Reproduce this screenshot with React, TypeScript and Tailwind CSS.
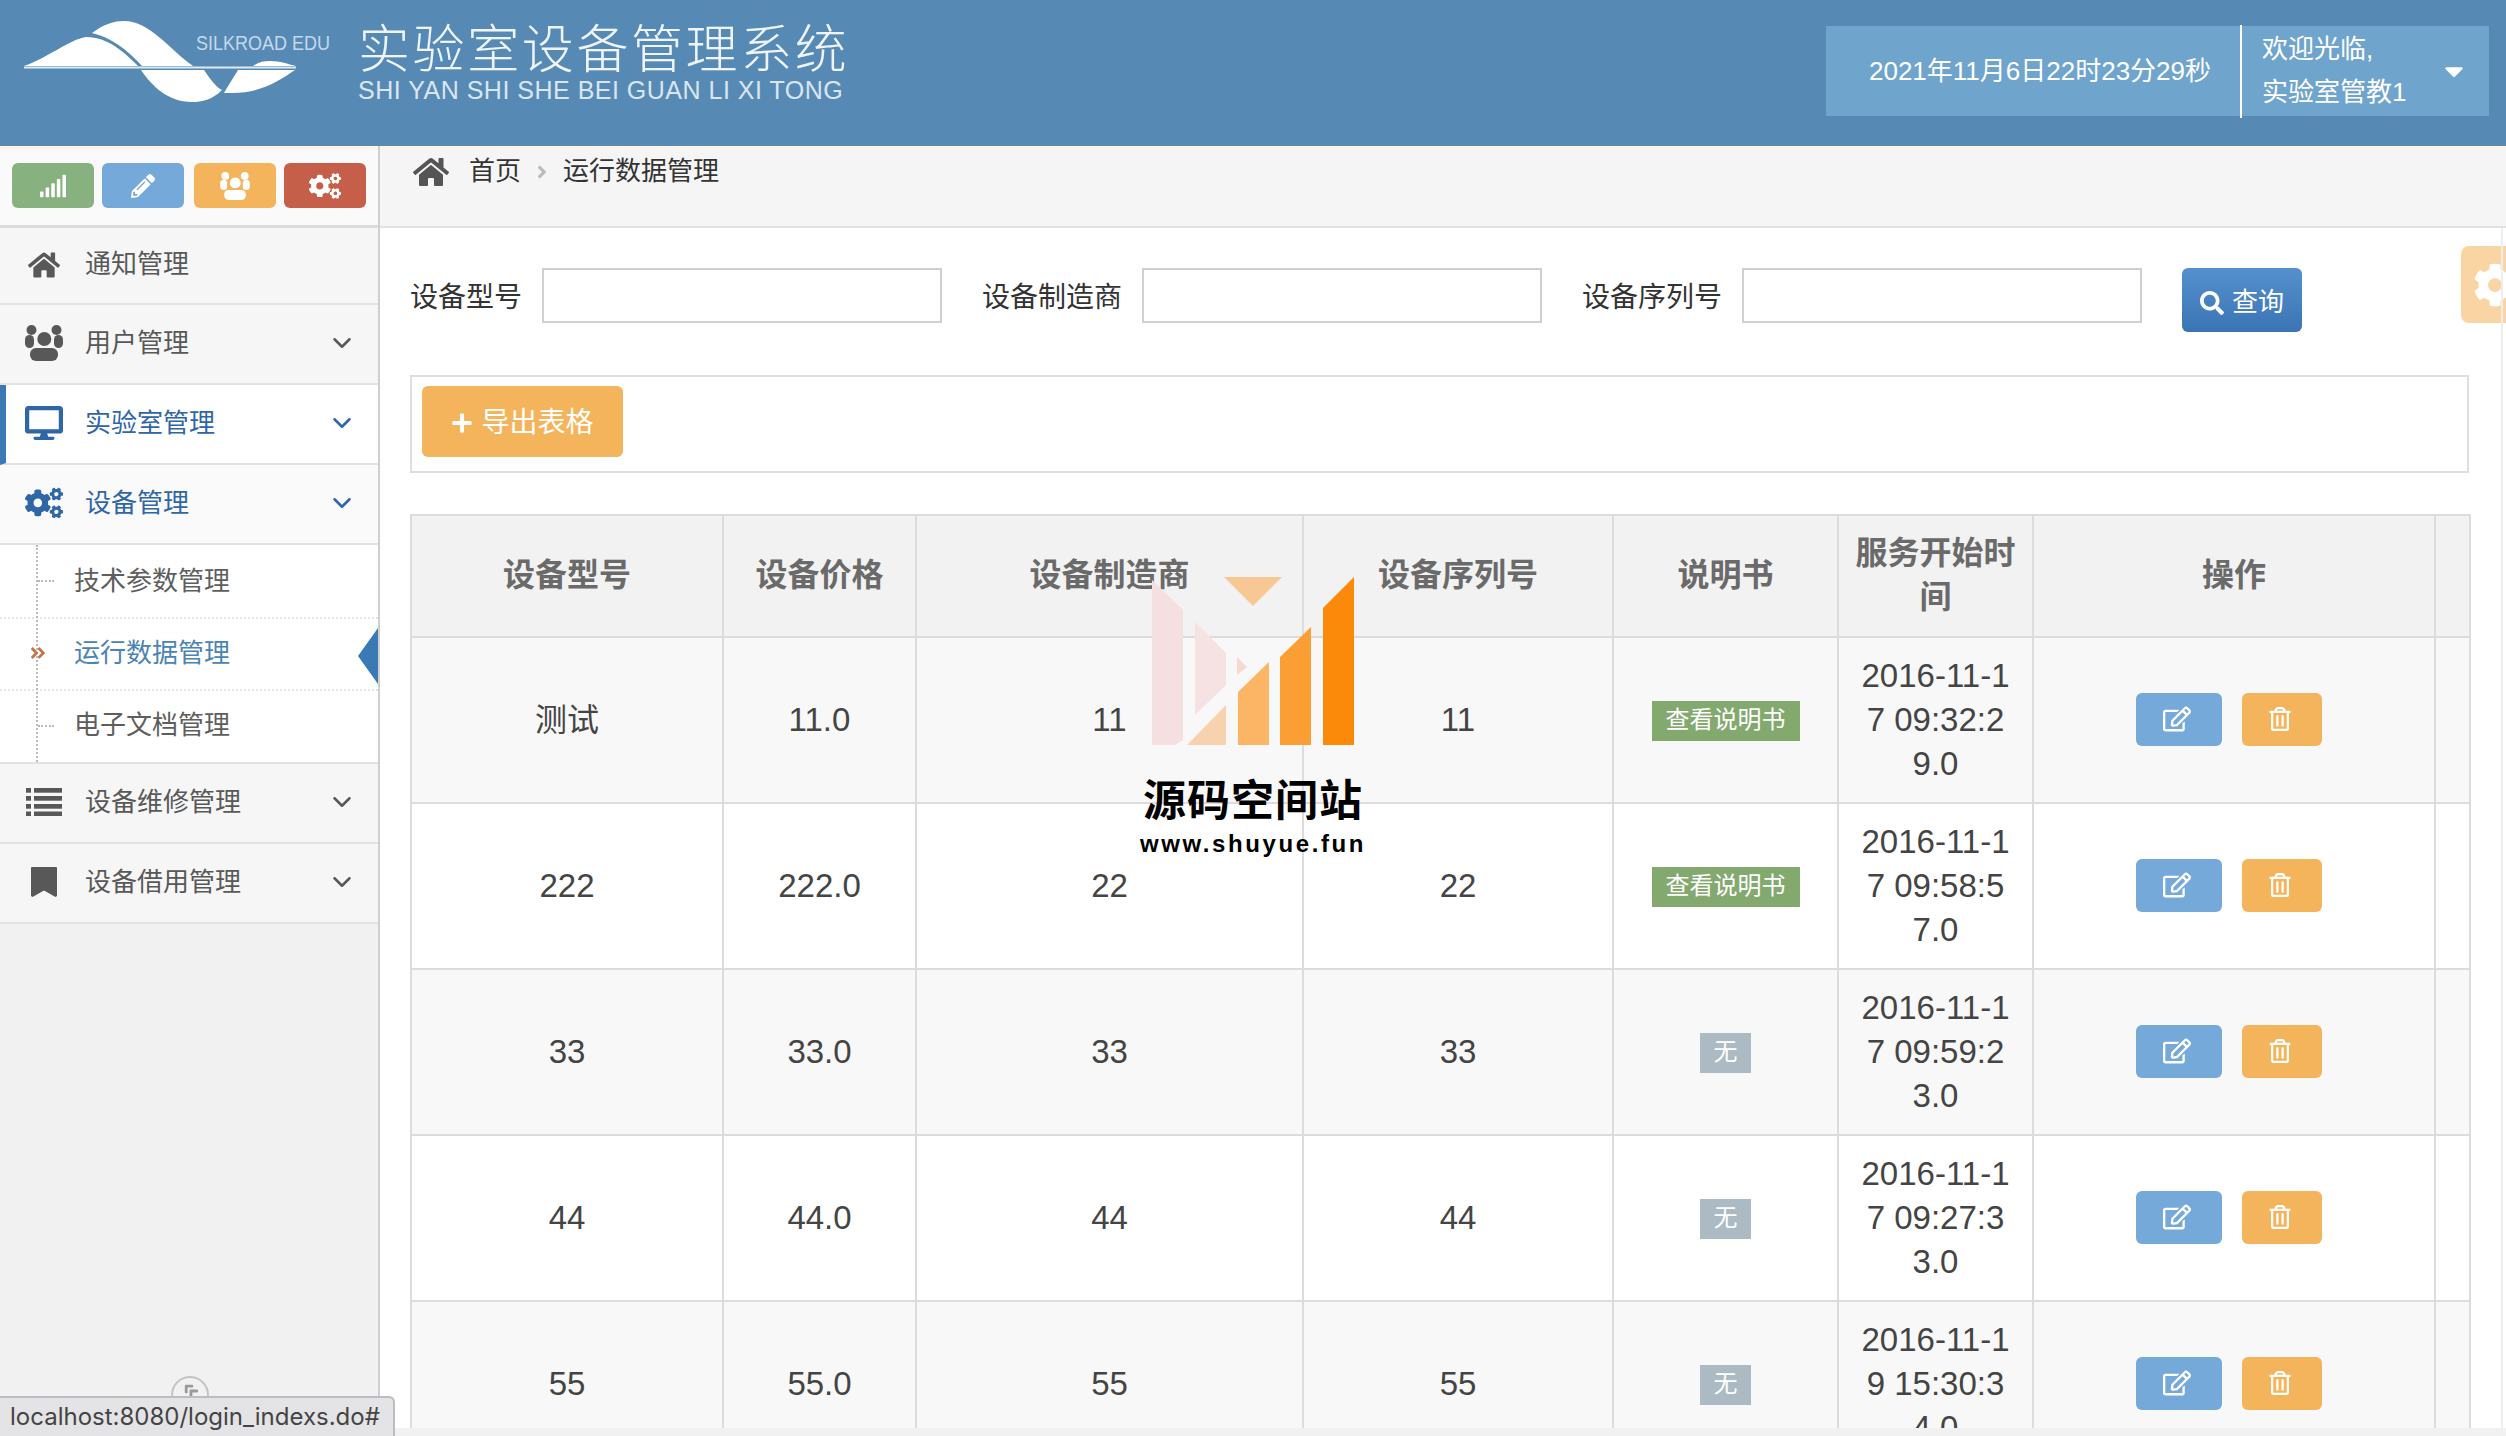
import React from "react";
import {
  FaHome, FaDesktop, FaCogs, FaAngleRight,
  FaAngleDoubleRight, FaAngleDoubleLeft, FaCaretDown, FaCog, FaSearch, FaPlus, FaSignal, FaPencilAlt, FaRegEdit, FaRegTrashAlt,
} from "react-icons/fa";
import { ChevronDown } from "lucide-react";

const font = "[font-family:'Liberation_Sans','Noto_Sans_CJK_SC',sans-serif]";

function Logo() {
  return (
    <svg width="345" height="146" viewBox="0 0 345 146" className="shrink-0">
      <path d="M24 66 C48 58 68 40 86 37 C108 37 124 52 138 66 Z" fill="#fff" />
      <path d="M92 33 C104 24 114 21 124 21 C150 21 170 50 193 66 L142 66 C128 50 110 37 92 33 Z" fill="#fff" />
      <path d="M141 70 L204 70 C210 79 216 87 222 90 C212 100 202 102 192 102 C168 102 152 86 141 70 Z" fill="#fff" />
      <path d="M224 93 C228 86 233 78 238 70 L295 70 C280 80 262 93 232 93 Z" fill="#fff" />
      <path d="M253 66 C258 62 264 61 270 61 C280 61 288 64 296 66 Z" fill="#fff" />
      <rect x="24" y="66.5" width="272" height="2" fill="#dfe9f2" />
      <text x="196" y="50" fontSize="20" fill="#c5d8ea" textLength="134" lengthAdjust="spacingAndGlyphs" fontFamily="Liberation Sans, sans-serif">SILKROAD EDU</text>
    </svg>
  );
}

function People({ w = 38, h = 36 }: { w?: number; h?: number }) {
  return (
    <svg width={w} height={h} viewBox="0 0 38 36" fill="currentColor">
      <circle cx="6.5" cy="5" r="5" />
      <circle cx="31.5" cy="5" r="5" />
      <circle cx="19.3" cy="14" r="7" />
      <rect x="0" y="10" width="9" height="13" rx="4.5" />
      <rect x="29" y="10" width="9" height="13" rx="4.5" />
      <rect x="5" y="23" width="28" height="13" rx="6" />
    </svg>
  );
}

function ListIcon() {
  return (
    <svg width="36" height="28" viewBox="0 0 36 28" fill="currentColor">
      {[0, 8, 16, 23.5].map((y) => (
        <g key={y}>
          <rect x="0" y={y} width="5" height="4.7" />
          <rect x="8" y={y} width="28" height="4.7" />
        </g>
      ))}
    </svg>
  );
}

function BookmarkIcon() {
  return (
    <svg width="26" height="30" viewBox="0 0 26 30" fill="currentColor">
      <path d="M1 0H25a1 1 0 0 1 1 1V29L24.5 30 13 23.5 1.5 30 0 29V1a1 1 0 0 1 1-1Z" />
    </svg>
  );
}

function Item({ icon, label, arrow = true, tone = "text-[#585858]", cls = "bg-[#f6f6f6]", h = "h-[80px]", pad = "pl-[25px]" }: { icon: React.ReactNode; label: string; arrow?: boolean; tone?: string; cls?: string; h?: string; pad?: string }) {
  return (
    <div className={`${h} ${cls} ${tone} ${pad} pb-[2px] flex items-center border-b-2 border-[#e2e2e2]`}>
      <span className="w-[38px] flex justify-center">{icon}</span>
      <span className="ml-[22px] text-[26px]">{label}</span>
      {arrow && <ChevronDown size={30} strokeWidth={2} className="ml-auto mr-[21px]" />}
    </div>
  );
}

function Sub({ label, active = false, h }: { label: string; active?: boolean; h: string }) {
  return (
    <div className={`relative ${h} flex items-center pl-[74px] text-[26px] ${active ? "text-[#4a84b4] pb-[2px]" : "text-[#5e5e5e]"}`}>
      {active ? (
        <FaAngleDoubleRight size={18} className="absolute left-[29px] text-[#c4764a]" />
      ) : (
        <span className="absolute left-[38px] w-[16px] border-t-2 border-dotted border-[#bbb]" />
      )}
      {label}
      {active && <span className="absolute right-0 top-[9px] w-[20px] h-[56px] bg-[#3c78b4] [clip-path:polygon(100%_0,100%_100%,0_50%)]" />}
    </div>
  );
}

function Sidebar() {
  return (
    <aside className="relative w-[380px] shrink-0 bg-[#f1f1f1] border-r-2 border-[#cfcfcf] flex flex-col">
      <div className="h-[82px] bg-[#fafafa] border-t-[4px] border-b-[3px] border-t-[#fcf3ea] border-b-[#dcdcdc] flex items-start gap-[8px] pl-[12px] pt-[13px]">
        <span className="w-[82px] h-[45px] rounded-[6px] bg-[#87b27f] text-white flex items-center justify-center"><FaSignal size={28} /></span>
        <span className="w-[82px] h-[45px] rounded-[6px] bg-[#75a9d9] text-white flex items-center justify-center"><FaPencilAlt size={24} /></span>
        <span className="ml-[2px] w-[82px] h-[45px] rounded-[6px] bg-[#f4b45c] text-white flex items-center justify-center"><People w={30} h={28} /></span>
        <span className="w-[82px] h-[45px] rounded-[6px] bg-[#c65f4a] text-white flex items-center justify-center"><FaCogs size={32} /></span>
      </div>
      <Item h="h-[77px]" arrow={false} icon={<FaHome size={32} />} label="通知管理" />
      <Item icon={<People />} label="用户管理" />
      <Item pad="pl-[19px]" cls="bg-white border-l-[6px] border-l-[#3c78b4]" tone="text-[#2f66a6]" icon={<FaDesktop size={38} />} label="实验室管理" />
      <Item cls="bg-[#fafafa]" tone="text-[#2f66a6]" icon={<FaCogs size={40} />} label="设备管理" />
      <div className="relative bg-white border-b-2 border-[#e2e2e2]">
        <span className="absolute left-[36px] top-0 bottom-0 border-l-2 border-dotted border-[#bbb]" />
        <div className="border-b-2 border-dotted border-[#e4e4e4]"><Sub label="技术参数管理" h="h-[72px]" /></div>
        <div className="border-b-2 border-dotted border-[#e4e4e4]"><Sub label="运行数据管理" active h="h-[70px]" /></div>
        <Sub label="电子文档管理" h="h-[71px] pb-[2px]" />
      </div>
      <Item icon={<ListIcon />} label="设备维修管理" />
      <Item icon={<BookmarkIcon />} label="设备借用管理" />
      <span className="absolute left-[171px] top-[1230px] w-[38px] h-[38px] rounded-full border-2 border-[#c4c4c4] bg-[#f1f1f1] text-[#999] flex items-start justify-center pt-[3px]">
        <FaAngleDoubleLeft size={18} className="rotate-45" />
      </span>
    </aside>
  );
}

function Field({ label }: { label: string }) {
  return (
    <div className="flex items-center h-[55px] mr-[40px]">
      <label className="text-[28px] pt-[5px] text-[#333] mr-[20px] whitespace-nowrap">{label}</label>
      <input className="w-[400px] h-[55px] border-2 border-[#d0d0d0] bg-white" />
    </div>
  );
}

const rows = [
  ["测试", "11.0", "11", "11", true, "2016-11-17 09:32:29.0"],
  ["222", "222.0", "22", "22", true, "2016-11-17 09:58:57.0"],
  ["33", "33.0", "33", "33", false, "2016-11-17 09:59:23.0"],
  ["44", "44.0", "44", "44", false, "2016-11-17 09:27:33.0"],
  ["55", "55.0", "55", "55", false, "2016-11-19 15:30:34.0"],
] as const;

const th = "border-2 border-[#dcdcdc] text-[32px] leading-[44px] font-bold text-[#6a6a6a] align-middle text-center px-[16px] pb-[2px]";
const td = "border-2 border-[#dcdcdc] h-[166px] text-[33px] leading-[44px] text-[#444] align-middle text-center";

function DataTable() {
  return (
    <table className="mt-[41px] w-[2059px] table-fixed border-collapse shrink-0">
      <colgroup>
        <col className="w-[312px]" />
        <col className="w-[193px]" />
        <col className="w-[387px]" />
        <col className="w-[310px]" />
        <col className="w-[225px]" />
        <col className="w-[195px]" />
        <col className="w-[402px]" />
        <col className="w-[35px]" />
      </colgroup>
      <thead>
        <tr className="h-[122px] bg-[#f2f2f2]">
          {["设备型号", "设备价格", "设备制造商", "设备序列号", "说明书", "服务开始时间", "操作", ""].map((t, i) => (
            <th key={i} className={th}>{t}</th>
          ))}
        </tr>
      </thead>
      <tbody>
        {rows.map((r, i) => (
          <tr key={i} className={i % 2 === 0 ? "bg-[#f8f8f8]" : "bg-white"}>
            <td className={td}><span className={i === 0 ? "text-[32px]" : ""}>{r[0]}</span></td>
            <td className={td}>{r[1]}</td>
            <td className={td}>{r[2]}</td>
            <td className={td}>{r[3]}</td>
            <td className={`${td} pb-[4px]`}>
              {r[4] ? (
                <span className="inline-flex items-center justify-center w-[148px] h-[40px] pb-[3px] bg-[#84a96f] text-white text-[24px] leading-none">查看说明书</span>
              ) : (
                <span className="inline-flex items-center justify-center w-[51px] h-[40px] pb-[3px] bg-[#abbac3] text-white text-[24px] leading-none">无</span>
              )}
            </td>
            <td className={`${td} px-[20px] break-all`}>{r[5]}</td>
            <td className={`${td} pb-[2px]`}>
              <div className="flex justify-start gap-[20px] pl-[102px]">
                <span className="w-[86px] h-[53px] rounded-[6px] bg-[#75a9d9] text-white flex items-center justify-center"><FaRegEdit size={28} className="mr-[4px]" /></span>
                <span className="w-[80px] h-[53px] rounded-[6px] bg-[#f4b45c] text-white flex items-center justify-center"><FaRegTrashAlt size={24} className="mr-[4px]" /></span>
              </div>
            </td>
            <td className={td}></td>
          </tr>
        ))}
      </tbody>
    </table>
  );
}

function Watermark() {
  return (
    <div className="absolute left-[1123px] top-[570px] w-[260px] pointer-events-none flex flex-col items-center">
      <svg width="260" height="180" viewBox="1123 570 260 180">
        <polygon points="1224,577 1282,577 1253,606" fill="#f8c894" />
        <polygon points="1152,580 1183,610 1183,740 1175,745 1152,745" fill="#f6dfe0" />
        <polygon points="1195,622 1226,653 1226,685 1195,715" fill="#f6e2e3" />
        <polygon points="1237,657 1247,667 1237,675" fill="#f8d9d0" />
        <polygon points="1187,745 1226,705 1226,745" fill="#f8d2ae" />
        <polygon points="1238,692 1269,662 1269,745 1238,745" fill="#fbb565" />
        <polygon points="1280,657 1311,627 1311,745 1280,745" fill="#fb9f35" />
        <polygon points="1323,608 1354,577 1354,745 1323,745" fill="#fb8a0a" />
      </svg>
      <div className="mt-[22px] text-[43px] leading-[50px] font-bold text-black tracking-[1px] whitespace-nowrap [font-family:'Noto_Sans_CJK_SC',sans-serif]">源码空间站</div>
      <div className="mt-[7px] text-[24px] leading-[30px] font-bold text-black tracking-[2.6px] whitespace-nowrap [font-family:'Liberation_Sans',sans-serif]">www.shuyue.fun</div>
    </div>
  );
}

export default function App() {
  return (
    <div className={`relative w-[2506px] h-[1436px] overflow-hidden bg-white ${font}`}>
      <header className="h-[146px] bg-[#568ab5] flex items-start">
        <Logo />
        <div className="ml-[13px] w-[490px] text-white">
          <div className="mt-[17px] text-[52px] leading-[58px] tracking-[2.6px] font-light whitespace-nowrap text-[#eef4f9] [font-family:'Noto_Sans_CJK_SC',sans-serif]">实验室设备管理系统</div>
          <div className="mt-[1px] text-[25px] leading-[28px] tracking-[0.5px] whitespace-nowrap text-[#d9e6f1]">SHI YAN SHI SHE BEI GUAN LI XI TONG</div>
        </div>
        <div className="ml-auto mr-[17px] mt-[26px] h-[90px] w-[663px] bg-[#6fa4cd] flex text-white text-[26px]">
          <div className="w-[414px] flex items-center justify-center whitespace-nowrap pl-[14px]">2021年11月6日22时23分29秒</div>
          <div className="w-[2px] bg-white -mt-[1px] h-[93px]" />
          <div className="flex-1 flex items-center pl-[20px] pr-[20px]">
            <div className="leading-[43px]">欢迎光临,<br />实验室管教1</div>
            <FaCaretDown size={30} className="ml-auto" />
          </div>
        </div>
      </header>
      <div className="flex h-[1290px]">
        <Sidebar />
        <main className="relative flex-1 min-w-0 flex flex-col bg-white">
          <div className="h-[82px] shrink-0 bg-[#f5f5f5] border-t-[4px] border-t-[#fcf3ea] border-b-2 border-b-[#e2e2e2] flex items-start pl-[33px] text-[26px] text-[#333] pt-[3px]">
            <FaHome size={36} className="text-[#555] mt-[1px]" />
            <span className="ml-[20px] leading-[36px]">首页</span>
            <FaAngleRight size={20} className="mx-[11px] mt-[9px] text-[#bbb]" />
            <span className="leading-[36px]">运行数据管理</span>
          </div>
          <div className="flex-1 min-h-0 overflow-hidden pl-[30px] pt-[40px] flex flex-col">
            <div className="flex items-start shrink-0">
              <Field label="设备型号" />
              <Field label="设备制造商" />
              <Field label="设备序列号" />
              <button className="w-[120px] h-[64px] pt-[5px] rounded-[6px] bg-gradient-to-b from-[#5590ce] to-[#3a74b4] text-white text-[26px] flex items-center justify-center gap-[8px]">
                <FaSearch size={24} />查询
              </button>
            </div>
            <div className="mt-[43px] w-[2059px] h-[98px] shrink-0 border-2 border-[#dedede] pl-[10px] pt-[9px]">
              <button className="w-[201px] h-[71px] pt-[2px] rounded-[6px] bg-[#f4b45c] text-white text-[28px] flex items-center justify-center gap-[8px]">
                <FaPlus size={22} />导出表格
              </button>
            </div>
            <DataTable />
          </div>
          <div className="h-[8px] shrink-0 bg-[#f1f1f1]" />
          <div className="absolute right-0 top-[100px] w-[45px] h-[77px] rounded-l-[8px] bg-[#f8d5a3] overflow-hidden flex items-center">
            <FaCog size={44} className="text-white ml-[12px] shrink-0" />
          </div>
          <div className="absolute right-[3px] top-[82px] bottom-[8px] border-r-2 border-[#eeeeee]" />
        </main>
      </div>
      <Watermark />
      <div className="absolute left-0 bottom-0 w-[395px] h-[40px] bg-[#e4e4e6] border-t-2 border-r-2 border-[#bdbdbd] rounded-tr-[6px] pl-[10px] flex items-center text-[24px] text-[#444] whitespace-nowrap overflow-hidden [font-family:'Inter',sans-serif]">
        localhost:8080/login_indexs.do#
      </div>
    </div>
  );
}
